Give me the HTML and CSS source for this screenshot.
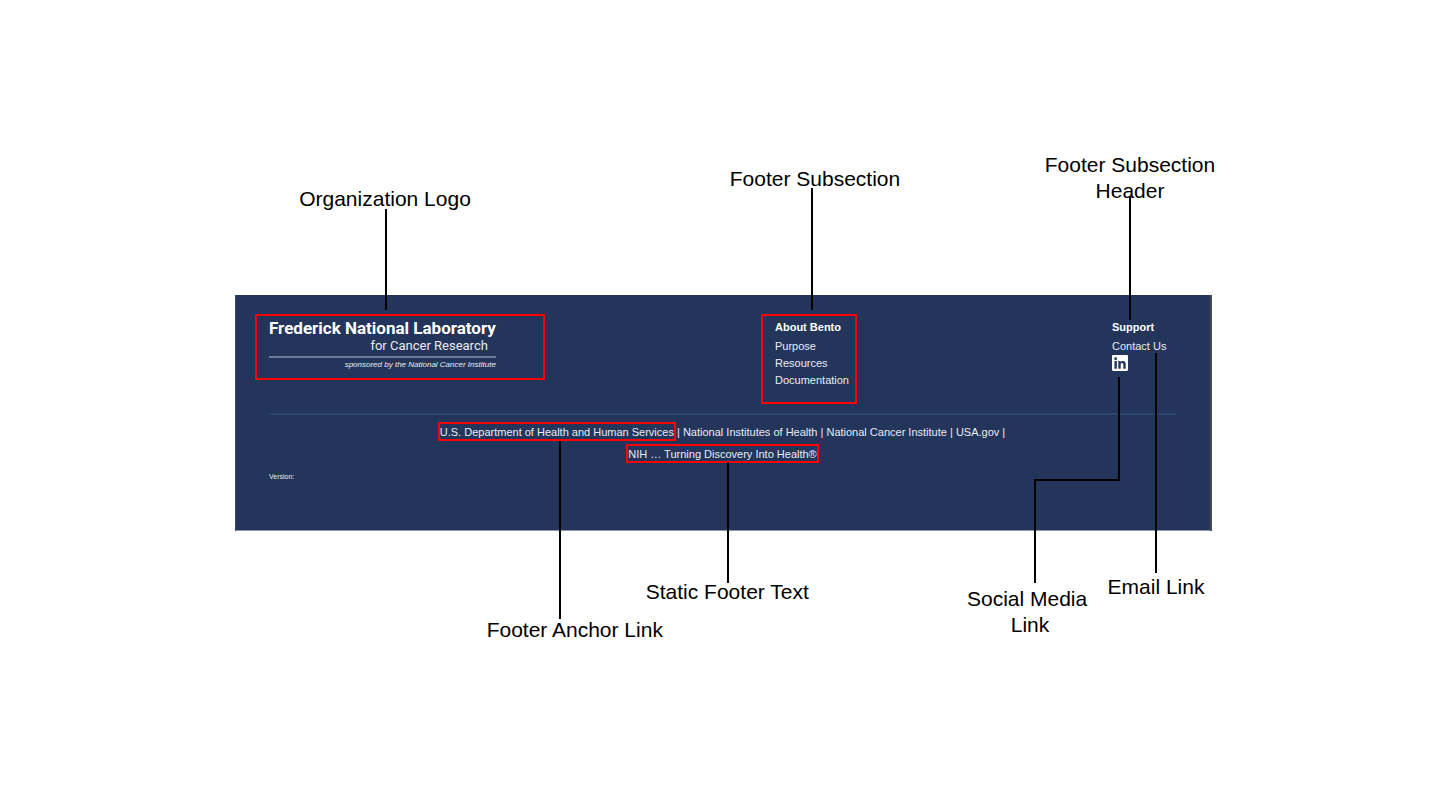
FILE: index.html
```html
<!DOCTYPE html>
<html lang="en">
<head>
<meta charset="utf-8">
<title>Footer anatomy</title>
<link rel="stylesheet" href="styles.css">
</head>
<body>
<main class="diagram">
  <footer class="footer">
    <div class="columns">
      <div class="anchor logo-anchor">
        <a class="logo" href="#">
          <span class="logo-name">Frederick National Laboratory</span>
          <span class="logo-sub">for Cancer Research</span>
          <span class="logo-sponsor">sponsored by the National Cancer Institute</span>
        </a>
        <span class="box logo-box"></span>
        <span class="line logo-line"></span>
        <span class="label logo-label">Organization Logo</span>
      </div>
      <section class="anchor">
        <h2 class="heading">About Bento</h2>
        <ul class="list">
          <li><a href="#">Purpose</a></li>
          <li><a href="#">Resources</a></li>
          <li><a href="#">Documentation</a></li>
        </ul>
        <span class="box about-box"></span>
        <span class="line about-line"></span>
        <span class="label about-label">Footer Subsection</span>
      </section>
      <section class="anchor">
        <h2 class="heading">Support</h2>
        <ul class="list">
          <li class="anchor">
            <a href="#">Contact Us</a>
            <span class="line email-line"></span>
            <span class="label email-label">Email Link</span>
          </li>
          <li class="anchor">
            <a class="social" href="#" aria-label="LinkedIn">
              <svg width="16" height="16" viewBox="0 0 448 448" aria-hidden="true"><path fill="#fff" d="M416 0H31.900C14.300 0 0 14.500 0 32.300v383.400C0 433.500 14.300 448 31.900 448H416c17.600 0 32-14.500 32-32.300V32.300C448 14.500 433.600 0 416 0zM135.400 384H69V170.200h66.500V384zM102.200 141c-21.300 0-38.500-17.300-38.500-38.500S80.900 64 102.200 64c21.200 0 38.500 17.300 38.500 38.500 0 21.300-17.200 38.500-38.500 38.500zM384.300 384h-66.400V280c0-24.800-.5-56.700-34.500-56.700-34.600 0-39.900 27-39.900 54.900V384h-66.400V170.200h63.700v29.200h.9c8.900-16.800 30.600-34.500 62.900-34.500 67.200 0 79.700 44.300 79.700 101.900V384z"/></svg>
            </a>
            <svg class="elbow" width="86" height="206" viewBox="0 0 86 206" aria-hidden="true"><path fill="none" stroke="#000" stroke-width="2" d="M85 0V103H1V206"/></svg>
            <span class="label social-label">Social Media&nbsp;<br>Link</span>
          </li>
        </ul>
        <span class="line support-line"></span>
        <span class="label support-label">Footer Subsection<br>Header</span>
      </section>
    </div>
    <div class="links">
      <div><span class="anchor inline"><a href="#">U.S. Department of Health and Human Services</a><span class="box text-box"></span><span class="line link-line"></span><span class="label link-label">Footer Anchor Link</span></span> | <a href="#">National Institutes of Health</a> | <a href="#">National Cancer Institute</a> | <a href="#">USA.gov</a> |</div>
      <div><span class="anchor inline">NIH … Turning Discovery Into Health®<span class="box text-box"></span><span class="line static-line"></span><span class="label static-label">Static Footer Text</span></span></div>
    </div>
    <p class="version">Version:</p>
  </footer>
</main>
</body>
</html>
```
FILE: styles.css
```css
body {
  margin: 0;
  background: #fff;
  font-family: "Liberation Sans", Arial, sans-serif;
}

.diagram {
  padding: 295px 228px 144px 235px;
}

.footer {
  box-sizing: border-box;
  padding: 25px 34px 49px 33px;
  border: solid #4b4a48;
  border-width: 0 2px 0 1px;
  border-left-color: #38475a;
  box-shadow: inset 0 -1px #8f99ae;
  background: #23355b;
  color: #e9ecf2;
  font-size: 11px;
}

.footer a {
  color: inherit;
  text-decoration: none;
}

.columns {
  display: grid;
  grid-template-columns: 506fr 337fr 64fr;
  padding-bottom: 24px;
  border-bottom: 2px solid #28456a;
}

.anchor {
  position: relative;
}

.inline {
  display: inline-block;
}

/* Logo */
.logo {
  display: inline-flex;
  flex-direction: column;
  font-family: Roboto, "Liberation Sans", sans-serif;
  white-space: nowrap;
}

.logo-name {
  font-size: 17px;
  font-weight: bold;
  line-height: 16px;
  color: #fff;
}

.logo-sub {
  align-self: flex-end;
  padding: 1px 8px 2px 0;
  font-size: 13px;
  line-height: 17px;
}

.logo-sponsor {
  border-top: 2px solid #6b7896;
  font-family: "Liberation Sans", Arial, sans-serif;
  font-size: 8px;
  font-style: italic;
  line-height: 14px;
  text-align: right;
}

/* Link columns */
.heading {
  margin: 0 0 4px;
  font-size: 11px;
  line-height: 14px;
  color: #fff;
  white-space: nowrap;
}

.list {
  margin: 0;
  padding: 0;
  list-style: none;
  line-height: 17px;
  white-space: nowrap;
}

.social,
.social svg {
  display: block;
}

.links {
  padding-top: 6px;
  line-height: 22px;
  text-align: center;
}

.version {
  margin: 7px 0 0;
  font-size: 7px;
  line-height: 10px;
}

/* Annotations */
.box {
  position: absolute;
  box-sizing: border-box;
  border: 2px solid #f00;
  pointer-events: none;
}

.logo-box { left: -14px; top: -6px; width: 290px; height: 66px; }
.about-box { left: -14px; top: -6px; width: 96px; height: 90px; }
.text-box { inset: 1px -2px 2px; }

.line {
  position: absolute;
  width: 2px;
  background: #000;
}

.logo-line { left: 116px; top: -111px; height: 101px; }
.about-line { left: 36px; top: -132px; height: 122px; }
.support-line { left: 17px; top: -124px; height: 124px; }
.email-line { left: 43px; top: 15px; height: 220px; }
.link-line { left: 119px; top: 20px; height: 178px; }
.static-line { left: 99px; top: 19px; height: 121px; }
.elbow { position: absolute; left: -78px; top: 22px; }

.label {
  position: absolute;
  width: 200px;
  color: #000;
  font-size: 21px;
  line-height: 26px;
  text-align: center;
}

.logo-label { left: 16px; top: -134px; }
.about-label { left: -60px; top: -154px; }
.support-label { left: -82px; top: -168px; }
.email-label { left: -56px; top: 236px; }
.social-label { left: -182px; top: 231px; }
.link-label { left: 35px; top: 196px; }
.static-label { left: -1px; top: 136px; }
```
